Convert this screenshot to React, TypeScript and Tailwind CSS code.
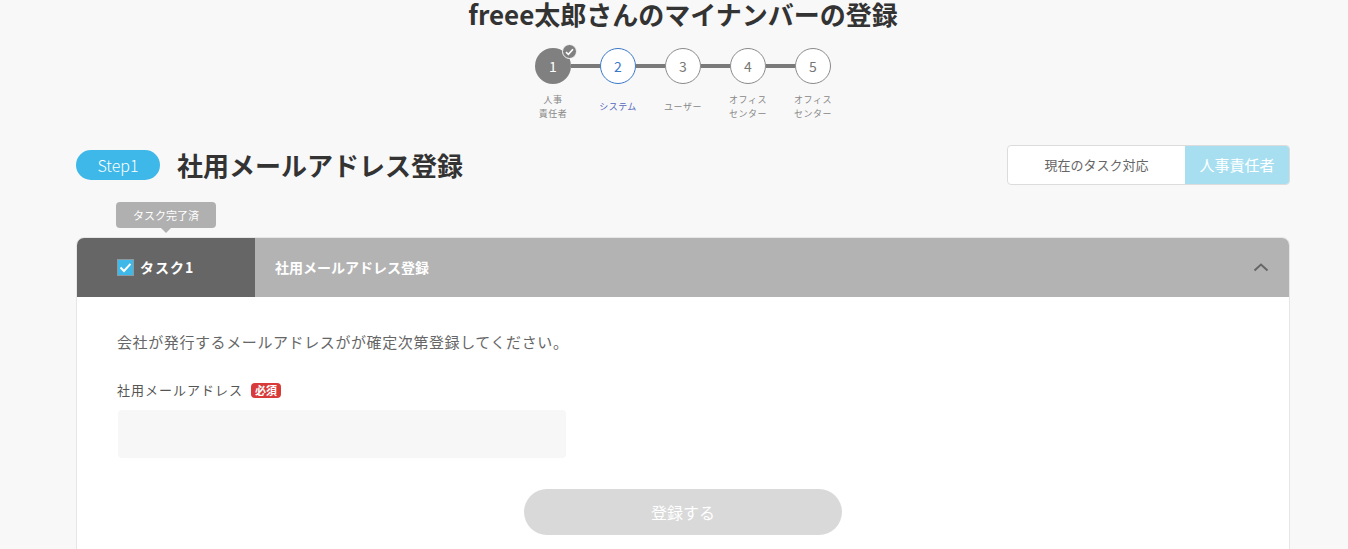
import React from "react";

const steps = [
  { n: "1", label: ["人事", "責任者"], state: "done" },
  { n: "2", label: ["システム"], state: "current" },
  { n: "3", label: ["ユーザー"], state: "todo" },
  { n: "4", label: ["オフィス", "センター"], state: "todo" },
  { n: "5", label: ["オフィス", "センター"], state: "todo" },
];

const font = { fontFamily: '"Noto Sans CJK JP", "Noto Sans", sans-serif' };

export default function App() {
  return (
    <div className="w-full min-h-[549px] overflow-hidden bg-[#f8f8f8]" style={font}>
      <div className="w-[1366px] flex flex-col items-center">
        <h1 className="h-[26px] leading-[28px] text-[26px] font-bold text-[#333]">
          freee太郎さんのマイナンバーの登録
        </h1>

        {/* stepper */}
        <div className="mt-[22px] flex flex-col items-center">
          <div className="flex items-center">
            {steps.map((s, i) => (
              <React.Fragment key={i}>
                {i > 0 && <div className="w-[29px] h-[4px] bg-[#7a7a7a]" />}
                <div className="relative">
                  {s.state === "done" ? (
                    <div className="w-[36px] h-[36px] rounded-full bg-[#808080] flex items-center justify-center text-white text-[14px]">
                      {s.n}
                    </div>
                  ) : s.state === "current" ? (
                    <div className="w-[36px] h-[36px] rounded-full bg-white border border-[#3a78c8] flex items-center justify-center text-[#3a78c8] text-[14px]">
                      {s.n}
                    </div>
                  ) : (
                    <div className="w-[36px] h-[36px] rounded-full bg-white border border-[#8a8a8a] flex items-center justify-center text-[#777] text-[14px]">
                      {s.n}
                    </div>
                  )}
                  {s.state === "done" && (
                    <div className="absolute top-[-4px] right-[-6px] w-[15px] h-[15px] rounded-full bg-[#808080] border border-[#f8f8f8] flex items-center justify-center">
                      <svg width="9" height="8" viewBox="0 0 9 8">
                        <path d="M1 4.2 L3.4 6.4 L8 1.3" stroke="#fff" strokeWidth="1.6" fill="none" />
                      </svg>
                    </div>
                  )}
                </div>
              </React.Fragment>
            ))}
          </div>
          <div className="flex mt-[8px]">
            {steps.map((s, i) => (
              <div
                key={i}
                className={`w-[65px] h-[28px] pt-[1px] flex flex-col items-center justify-center text-[9px] leading-[14px] tracking-[0.5px] ${
                  s.state === "current" ? "text-[#5566bb]" : "text-[#888]"
                }`}
              >
                {s.label.map((l, j) => (
                  <span key={j}>{l}</span>
                ))}
              </div>
            ))}
          </div>
        </div>

        {/* content */}
        <div className="w-[1214px] mt-[25px]">
          <div className="flex items-center justify-between">
            <div className="flex items-center">
              <div className="w-[84px] h-[30px] rounded-full bg-[#3db8e8] text-white text-[16px] font-light flex items-center justify-center">
                Step1
              </div>
              <h2 className="ml-[17px] text-[26px] font-bold text-[#333] leading-[30px]">
                社用メールアドレス登録
              </h2>
            </div>
            <div className="flex h-[40px] w-[283px] rounded-[4px] border border-[#dcdcdc] bg-white overflow-hidden">
              <div className="flex-1 flex items-center justify-center text-[13px] text-[#666]">
                現在のタスク対応
              </div>
              <div className="w-[104px] bg-[#a8dff0] text-white text-[15px] flex items-center justify-center">
                人事責任者
              </div>
            </div>
          </div>

          {/* tooltip */}
          <div className="mt-[17px] ml-[40px] relative w-[100px] h-[26px] rounded-[4px] bg-[#b0b0b0] text-white text-[11px] flex items-center justify-center">
            タスク完了済
            <div className="absolute left-[45px] bottom-[-5px] w-0 h-0 border-l-[5px] border-r-[5px] border-t-[5px] border-l-transparent border-r-transparent border-t-[#b0b0b0]" />
          </div>

          {/* card */}
          <div className="mt-[9px] bg-white rounded-t-[8px] border border-[#e6e6e6] overflow-hidden h-[330px]">
            <div className="flex h-[59px]">
              <div className="w-[178px] bg-[#666] flex items-center pl-[40px]">
                <div className="w-[17px] h-[17px] bg-[#3db8e8] border border-[#8a9aa0] flex items-center justify-center">
                  <svg width="13" height="11" viewBox="0 0 13 11">
                    <path d="M1.5 5.5 L5 9 L11.5 1.8" stroke="#fff" strokeWidth="2" fill="none" />
                  </svg>
                </div>
                <span className="ml-[6px] text-white text-[14px] font-bold tracking-[1px]">タスク1</span>
              </div>
              <div className="flex-1 bg-[#b3b3b3] flex items-center justify-between pl-[20px] pr-[20px]">
                <span className="text-white text-[14px] font-bold">社用メールアドレス登録</span>
                <svg width="16" height="9" viewBox="0 0 16 9">
                  <path d="M1.5 7.5 L8 1.5 L14.5 7.5" stroke="#666" strokeWidth="2" fill="none" />
                </svg>
              </div>
            </div>
            <div className="px-[40px] pt-[34px]">
              <p className="text-[15px] leading-[22px] text-[#666] tracking-[0.6px]">
                会社が発行するメールアドレスがが確定次第登録してください。
              </p>
              <div className="mt-[27px] flex items-center">
                <span className="text-[13px] leading-[20px] text-[#555] tracking-[1px]">社用メールアドレス</span>
                <span className="ml-[8px] h-[15px] px-[4px] rounded-[4px] bg-[#d83a3a] text-white text-[11px] font-bold leading-[15px]">
                  必須
                </span>
              </div>
              <div className="mt-[10px] ml-[1px] w-[448px] h-[48px] rounded-[4px] bg-[#f7f7f7]" />
              <div className="mt-[31px] flex justify-center">
                <button className="w-[318px] h-[46px] rounded-full bg-[#d9d9d9] text-white text-[16px]">
                  登録する
                </button>
              </div>
            </div>
          </div>
        </div>
      </div>
    </div>
  );
}
